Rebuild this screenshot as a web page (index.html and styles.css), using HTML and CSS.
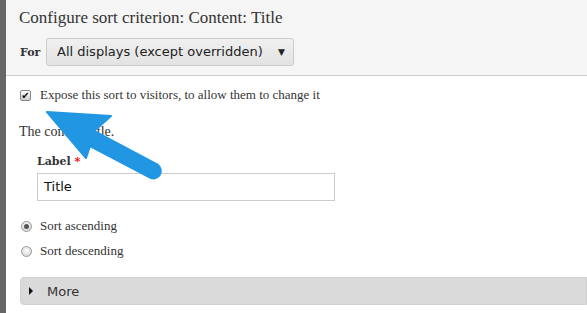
FILE: index.html
```html
<!DOCTYPE html>
<html lang="en">
<head>
    <meta charset="UTF-8">
    <title>Configure sort criterion</title>
    <link rel="stylesheet" href="styles.css">
</head>
<body>
    <div class="page">
        <div class="head">
            <h1 class="title">Configure sort criterion: Content: Title</h1>
            <div class="for-row">
                <span class="for">For</span>
                <div class="select">All displays (except overridden) <span class="caret">&#9660;</span></div>
            </div>
        </div>

        <div class="main">
            <div class="check-row">
                <span class="box">&#10004;</span>
                <span>Expose this sort to visitors, to allow them to change it</span>
            </div>
            <p class="desc">The content title.</p>

            <div class="field">
                <div class="label">Label <span class="req">*</span></div>
                <div class="input">Title</div>
            </div>

            <div class="radio-row first"><span class="radio on"></span>Sort ascending</div>
            <div class="radio-row"><span class="radio"></span>Sort descending</div>

            <div class="more"><span class="tri"></span>More</div>
        </div>

        <!-- annotation arrow over the checkbox -->
        <svg class="arrow" width="587" height="313" viewBox="0 0 587 313">
            <path d="M47,112 L111,116 L94,131 L158,165 A7.5,7.5 0 0 1 151,178 L90,146 L86,158 Z" fill="#2196e3" stroke="#2196e3" stroke-width="2" stroke-linejoin="round"/>
        </svg>
    </div>
</body>
</html>
```

FILE: styles.css
```css
body {
    margin: 0;
    background: #fff;
    font-family: "Liberation Serif", Georgia, serif;
    color: #333;
}

.page {
    position: relative;
    border-left: 6px solid #666;
    height: 313px;
    overflow: hidden;
}

.head {
    background: #f5f5f5;
    border-bottom: 1px solid #ccc;
    padding: 8px 0 9px 13px;
}

.title {
    margin: 0;
    font-size: 17px;
    font-weight: normal;
    line-height: 20px;
    color: #333;
}

.for-row {
    display: flex;
    align-items: center;
    margin-top: 10px;
}

.for {
    font-family: "DejaVu Serif", serif;
    font-size: 11px;
    font-weight: bold;
    width: 26px;
    padding-left: 1px;
}

.select {
    font-family: "DejaVu Sans", Verdana, sans-serif;
    font-size: 13px;
    color: #222;
    width: 228px;
    height: 26px;
    line-height: 26px;
    padding-left: 10px;
    padding-right: 8px;
    border: 1px solid #ccc;
    border-radius: 3px;
    background: linear-gradient(#f0f0f0, #e2e2e2);
    display: flex;
    justify-content: space-between;
}

.caret {
    font-size: 9px;
}

.main {
    padding: 12px 0 0 14px;
    font-size: 13px;
}

.check-row {
    display: flex;
    align-items: center;
    gap: 9px;
    height: 14px;
    color: #333;
}

.box {
    width: 9px;
    height: 9px;
    border: 1px solid #888;
    border-radius: 2px;
    background: linear-gradient(#fff, #ccc);
    font-family: "DejaVu Sans", sans-serif;
    font-size: 10px;
    line-height: 9px;
    text-align: center;
    color: #111;
}

.desc {
    font-size: 14px;
    line-height: 16px;
    margin: 22px 0 0 -1px;
}

.field {
    padding-left: 17px;
    margin-top: 14px;
}

.label {
    font-family: "DejaVu Serif", serif;
    font-weight: bold;
    font-size: 11px;
    line-height: 15px;
}

.req {
    color: #e00;
}

.input {
    margin-top: 4px;
    width: 290px;
    height: 26px;
    border: 1px solid #ccc;
    line-height: 26px;
    padding-left: 6px;
    font-family: "DejaVu Sans", Verdana, sans-serif;
    font-size: 13px;
    color: #111;
}

.radio-row {
    display: flex;
    align-items: center;
    gap: 8px;
    margin-top: 11px;
    height: 14px;
    font-size: 13px;
}

.radio-row.first {
    margin-top: 18px;
}

.radio {
    width: 9px;
    height: 9px;
    margin-left: 1px;
    border: 1px solid #999;
    border-radius: 50%;
    background: radial-gradient(circle at 50% 40%, #fff, #ccc);
    position: relative;
}

.radio.on::after {
    content: "";
    position: absolute;
    left: 2px;
    top: 2px;
    width: 5px;
    height: 5px;
    border-radius: 50%;
    background: #555;
}

.more {
    margin-top: 19px;
    height: 26px;
    background: #dadada;
    border: 1px solid #d0d0d0;
    border-radius: 4px 0 0 4px;
    display: flex;
    align-items: center;
    font-family: "DejaVu Sans", Verdana, sans-serif;
    font-size: 13px;
    color: #333;
}

.tri {
    width: 0;
    height: 0;
    border-left: 4px solid #111;
    border-top: 4px solid transparent;
    border-bottom: 4px solid transparent;
    margin: 0 14px 0 8px;
}

.arrow {
    position: absolute;
    left: -6px;
    top: 0;
}
```
